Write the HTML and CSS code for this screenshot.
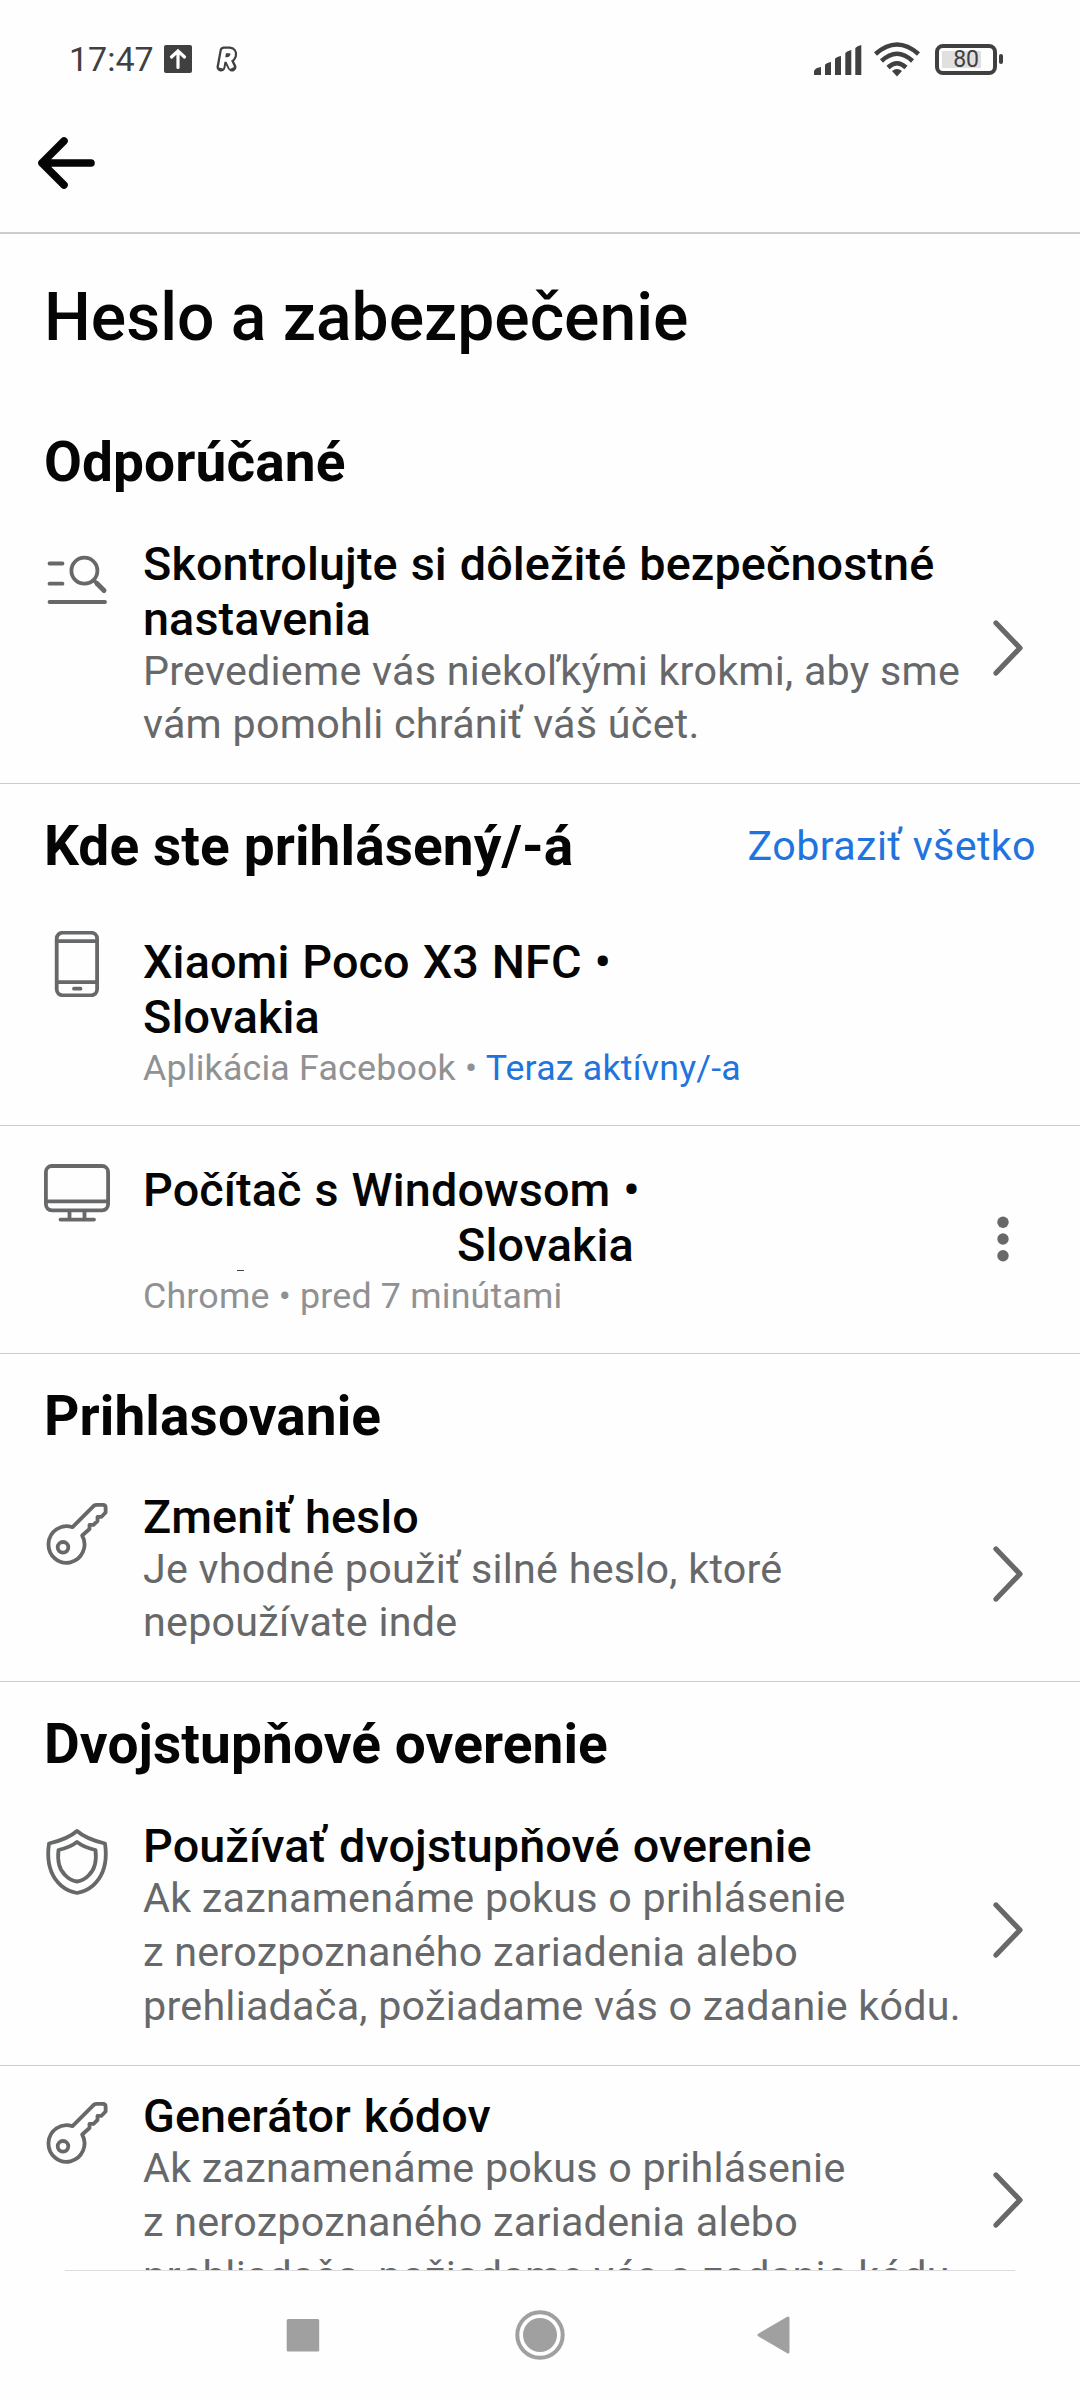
FILE: index.html
```html
<!DOCTYPE html>
<html lang="sk">
<head>
<meta charset="utf-8">
<title>Heslo a zabezpečenie</title>
<link rel="stylesheet" href="styles.css">
</head>
<body>
<svg class="defs" width="0" height="0">
  <symbol id="key" viewBox="0 0 66 66">
    <path d="M28.5 27.2 48.5 7.2Q50 4.800 52.500 4.800H59Q61.600 4.800 61.600 7.500V12.500L57.500 16.800H53.500V21L49.500 24.800H45.500V29L38.200 35.500A18 18.300 0 1 1 28.500 27.200Z"/>
    <circle cx="19" cy="47.300" r="5.300"/>
  </symbol>
  <symbol id="chevron" viewBox="0 0 30 56"><path d="M3 3 27 28 3 53"/></symbol>
</svg>
<div class="screen">
  <header class="status">
    <span class="clock">17:47</span>
    <svg class="upload" width="28" height="28" viewBox="0 0 28 28"><rect width="28" height="28" rx="2" fill="#404040"/><path d="M14 22.500V7M7.500 12 14 6l6.500 6" fill="none" stroke="#fff" stroke-width="3.200" stroke-linecap="round"/></svg>
    <svg class="rlogo" width="24" height="28" viewBox="0 0 24 28" fill="none" stroke-linejoin="round"><path d="M6 22 9 6H14.500Q18.500 6.500 17.500 10.500Q16 14.500 12 14.500H9M13 14.500 17 22" stroke="#404040" stroke-width="9" stroke-linecap="round"/><path d="M6 23 9 6H14.500Q18.500 6.500 17.500 10.500Q16 14.500 12 14.500H9M13 14.500 17 23" stroke="#fff" stroke-width="4.600"/></svg>
    <span class="spacer"></span>
    <svg class="signal" width="50" height="34" viewBox="0 0 50 34" fill="#404040"><path d="M1 29Q2 27 4 26L8 25V33H1zM12 23Q13 21 18 20V33H12zM22 17Q23 15 28 14V33H22zM32.300 11Q34 9 38.300 8V33H32.300zM42.300 6Q44 4 48.300 3V33H42.300z"/></svg>
    <svg class="wifi" width="46" height="36" viewBox="0 0 46 36" fill="none" stroke="#404040" stroke-width="4.500"><path d="M1.500 13Q23-6 44.500 13M7.500 20Q23 5.500 38.500 20M14 26.500Q23 18 32 26.500"/><path d="M18 30Q23 26 28 30L23 35.500Z" fill="#404040" stroke="none"/></svg>
    <span class="battery"><span class="level">80</span></span>
    <span class="battery-tip"></span>
  </header>
  <div class="appbar">
    <svg width="60" height="54" viewBox="0 0 60 54"><path d="M55 27H6M28 5 6 27 28 49" fill="none" stroke="#050505" stroke-width="7.600" stroke-linecap="round" stroke-linejoin="round"/></svg>
  </div>
  <main class="content">
    <h1>Heslo a zabezpečenie</h1>

    <section>
      <div class="head"><h2>Odporúčané</h2></div>
      <div class="item">
        <svg class="icon" viewBox="0 0 66 66"><path d="M5.500 16.500H18.500M5.500 36.700H18.500M5.500 55H61"/><circle cx="40.400" cy="23.700" r="13"/><path d="M50 33.500 52 35.500"/><path d="M53 36.500 60 43.500" stroke-width="5"/></svg>
        <div class="text"><h3>Skontrolujte si dôležité bezpečnostné nastavenia</h3><p>Prevedieme vás niekoľkými krokmi, aby sme vám pomohli chrániť váš účet.</p></div>
        <svg class="chevron"><use href="#chevron"/></svg>
      </div>
    </section>

    <section>
      <div class="head"><h2>Kde ste prihlásený/-á</h2><a class="all">Zobraziť všetko</a></div>
      <div class="item device">
        <svg class="icon" viewBox="0 0 66 66"><rect x="12.700" y="1.700" width="40.400" height="62.600" rx="6"/><path d="M12.700 10.200H53.100M12.700 51.200H53.100M30 57.700H36.500"/></svg>
        <div class="text"><h3>Xiaomi Poco X3 NFC •<br>Slovakia</h3><p>Aplikácia Facebook • <span class="active">Teraz aktívny/-a</span></p></div>
      </div>
      <div class="item device">
        <svg class="icon" viewBox="0 0 66 66"><rect x="1.900" y="7" width="62.200" height="44.300" rx="6"/><path d="M1.800 42.300H64.200M25.500 52V60M40.500 52V60M16.500 60.600H50"/></svg>
        <div class="text"><h3>Počítač s Windowsom •<br><span class="place">Slovakia</span></h3><p>Chrome • pred 7 minútami</p><i class="speck"></i></div>
        <svg class="more" width="14" height="46" viewBox="0 0 14 46"><circle cx="7" cy="6.300" r="5.700"/><circle cx="7" cy="23" r="5.700"/><circle cx="7" cy="39.700" r="5.700"/></svg>
      </div>
    </section>

    <section class="login">
      <div class="head"><h2>Prihlasovanie</h2></div>
      <div class="item">
        <svg class="icon"><use href="#key"/></svg>
        <div class="text"><h3>Zmeniť heslo</h3><p>Je vhodné použiť silné heslo, ktoré nepoužívate inde</p></div>
        <svg class="chevron"><use href="#chevron"/></svg>
      </div>
    </section>

    <section>
      <div class="head"><h2>Dvojstupňové overenie</h2></div>
      <div class="item long">
        <svg class="icon" viewBox="0 0 66 66"><path d="M33 2Q24 10 5 14.500Q1 42 17 56.500Q24 62.500 33 64Q42 62.500 49 56.500Q65 42 61 14.500Q42 10 33 2Z"/><path d="M33 13Q26 18.500 14.500 21Q12.500 38 21 46Q26 51.500 33 52.500Q40 51.500 45 46Q53.500 38 51.500 21Q40 18.500 33 13Z"/></svg>
        <div class="text"><h3>Používať dvojstupňové overenie</h3><p>Ak zaznamenáme pokus o prihlásenie z&nbsp;nerozpoznaného zariadenia alebo prehliadača, požiadame vás o zadanie kódu.</p></div>
        <svg class="chevron"><use href="#chevron"/></svg>
      </div>
      <div class="item long">
        <svg class="icon"><use href="#key"/></svg>
        <div class="text"><h3>Generátor kódov</h3><p>Ak zaznamenáme pokus o prihlásenie z&nbsp;nerozpoznaného zariadenia alebo prehliadača, požiadame vás o zadanie kódu.</p></div>
        <svg class="chevron"><use href="#chevron"/></svg>
      </div>
    </section>
  </main>
  <nav class="navbar">
    <svg width="34" height="34" viewBox="0 0 34 34"><rect x=".7" y="1" width="32.500" height="32.500" rx="1.500"/></svg>
    <svg width="50" height="50" viewBox="0 0 50 50"><circle cx="25" cy="25" r="17"/><circle cx="25" cy="25" r="22.700" fill="none" stroke="#a0a0a0" stroke-width="4"/></svg>
    <svg class="back" width="34" height="40" viewBox="0 0 34 40"><path d="M2 20 31 3V37Z" stroke="#a0a0a0" stroke-width="3" stroke-linejoin="round"/></svg>
  </nav>
</div>
</body>
</html>
```
FILE: styles.css
```css
* { box-sizing: border-box; margin: 0; padding: 0; }
body { background: #fff; font-family: Roboto, sans-serif; color: #050505; }
.defs { display: block; }
.screen { width: 1080px; height: 2400px; display: flex; flex-direction: column; overflow: hidden; background: #fefefe; }
.status { height: 96px; padding: 22px 77px 0 69px; display: flex; align-items: center; color: #404040; flex: none; }
.clock { font-size: 34px; line-height: 40px; }
.upload { margin-left: 10px; }
.rlogo { margin-left: 23px; overflow: visible; }
.spacer { flex: 1; }
.wifi { margin: 0 15px 0 11px; }
.battery { width: 62px; height: 31px; border: 4px solid #404040; border-radius: 8px; padding: 3px; display: flex; }
.level { width: 39px; background: #e0e0e0; font-size: 23px; font-weight: 400; line-height: 18px; text-align: right; padding-right: 2px; }
.battery-tip { width: 4px; height: 10px; margin-left: 2px; background: #404040; border-radius: 2px; }
.appbar { height: 138px; padding: 40px 0 0 36px; border-bottom: 2px solid #ccc; flex: none; }
.appbar svg { display: block; }
.content { flex: 1; min-height: 0; overflow: hidden; }
h1 { height: 166px; padding: 45px 44px 0; font-size: 66px; line-height: 78px; font-weight: 500; }
.head { height: 114px; padding: 30px 44px 0; display: flex; justify-content: space-between; }
.login .head { height: 113px; }
h2 { font-size: 55px; line-height: 64px; font-weight: 700; letter-spacing: .1px; }
.all { font-size: 41.250px; line-height: 64px; letter-spacing: .38px; color: #1f74de; }
.item { display: flex; align-items: flex-start; padding: 23px 55px 32px 44px; border-bottom: 1px solid #ccc; }
.icon { width: 66px; height: 66px; flex: none; margin: 10px 33px 0 0; fill: none; stroke: #67686a; stroke-width: 3.800; stroke-linecap: round; stroke-linejoin: round; }
.text { width: 825px; flex: none; position: relative; }
h3 { font-size: 46.750px; line-height: 55px; font-weight: 500; letter-spacing: .1px; word-spacing: 1.200px; }
.item p { margin-top: -2px; font-size: 41.250px; line-height: 53px; letter-spacing: .25px; color: #67686a; }
.item.long p { margin-top: -3px; line-height: 54px; }
.chevron { width: 30px; height: 56px; margin-left: 25px; flex: none; align-self: center; position: relative; top: 4px; fill: none; stroke: #67686a; stroke-width: 5.200; stroke-linecap: round; stroke-linejoin: round; }
.device { height: 228px; padding-top: 37px; padding-bottom: 0; }
.device .icon { margin-top: -4px; }
.item.device p { margin-top: 0; font-size: 35.750px; line-height: 47px; letter-spacing: .2px; color: #8f9193; }
.device .active { color: #1f74de; }
.place { margin-left: 314px; }
.speck { position: absolute; left: 94px; top: 107px; width: 7px; height: 1px; background: #444; }
.more { margin: 53px 0 0 28px; fill: #67686a; }
.navbar { height: 130px; flex: none; display: flex; align-items: center; justify-content: center; gap: 195px; fill: #a0a0a0; background: linear-gradient(#ddd, #ddd) center top / 950px 1px no-repeat; }
.back { margin: 0 3px 0 -3px; }
```
